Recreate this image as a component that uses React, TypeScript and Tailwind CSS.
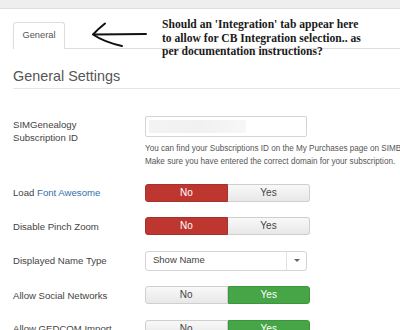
import React from 'react';

const sans = { fontFamily: '"Liberation Sans", Arial, sans-serif' };

interface ToggleProps {
  value: 'no' | 'yes';
}

const Toggle: React.FC<ToggleProps> = ({ value }) => (
  <div className="flex w-[165px] h-[18px] text-[10px] leading-none">
    <div
      className={
        value === 'no'
          ? 'flex-1 flex items-center justify-center rounded-l-[3px] bg-[#bd362f] border border-[#a8302a] text-white'
          : 'flex-1 flex items-center justify-center rounded-l-[3px] bg-gradient-to-b from-[#f8f8f8] to-[#e8e8e8] border border-[#cfcfcf] text-[#444]'
      }
    >
      No
    </div>
    <div
      className={
        value === 'yes'
          ? 'flex-1 flex items-center justify-center rounded-r-[3px] bg-[#46a546] border border-[#3f953f] text-white'
          : 'flex-1 flex items-center justify-center rounded-r-[3px] bg-gradient-to-b from-[#f8f8f8] to-[#e8e8e8] border border-l-0 border-[#cfcfcf] text-[#444]'
      }
    >
      Yes
    </div>
  </div>
);

const Row: React.FC<{ label: React.ReactNode; children: React.ReactNode; className?: string }> = ({
  label,
  children,
  className = '',
}) => (
  <div className={`flex items-center ${className}`}>
    <div className="w-[132px] shrink-0 text-[9.6px] leading-[13px] text-[#444]">{label}</div>
    {children}
  </div>
);

export default function App() {
  return (
    <div className="relative w-[400px] h-[330px] overflow-hidden bg-white" style={sans}>
      <div className="h-[9px] bg-[#eeeeee] border-b border-[#dddddd]" />

      <div className="pl-[13px]">
        {/* tabs */}
        <div className="mt-[13px] flex border-b border-[#dddddd] h-[27px]">
          <div className="w-[52px] h-[27px] border border-b-0 border-[#dddddd] rounded-t-[3px] bg-white flex items-center justify-center text-[9.3px] text-[#555] -mb-px">
            General
          </div>
        </div>

        <h2 className="mt-[17px] pb-[2px] text-[14.4px] leading-[20px] text-[#555] border-b border-[#e5e5e5]">
          General Settings
        </h2>

        <Row
          className="mt-[27px] !items-start"
          label={
            <div className="pt-[2px]">
              SIMGenealogy
              <br />
              Subscription ID
            </div>
          }
        >
          <div className="flex flex-col">
            <div className="w-[162px] h-[21px] border border-[#d4d4d4] rounded-[2px] bg-white p-[3px]">
              <div className="w-[97px] h-full bg-gradient-to-r from-[#f3f3f3] via-[#f1f1f1] to-[#f7f7f7]" />
            </div>
            <div className="mt-[5px] text-[8.15px] leading-[13px] text-[#555] whitespace-nowrap">
              You can find your Subscriptions ID on the My Purchases page on SIMBoss.com
              <br />
              Make sure you have entered the correct domain for your subscription.
            </div>
          </div>
        </Row>

        <Row
          className="mt-[15.5px]"
          label={
            <>
              Load <span className="text-[#3071a9]">Font Awesome</span>
            </>
          }
        >
          <Toggle value="no" />
        </Row>

        <Row className="mt-[15.5px]" label="Disable Pinch Zoom">
          <Toggle value="no" />
        </Row>

        <Row className="mt-[15.5px]" label="Displayed Name Type">
          <div className="flex w-[162px] h-[20px] border border-[#d4d4d4] rounded-[3px] bg-white text-[9.5px] text-[#444]">
            <div className="flex-1 flex items-center pl-[7px]">Show Name</div>
            <div className="w-[20px] border-l border-[#e0e0e0] flex items-center justify-center">
              <div className="w-0 h-0 border-l-[3px] border-r-[3px] border-t-[3px] border-l-transparent border-r-transparent border-t-[#666]" />
            </div>
          </div>
        </Row>

        <Row className="mt-[15.5px]" label="Allow Social Networks">
          <Toggle value="yes" />
        </Row>

        <Row className="mt-[15.5px]" label="Allow GEDCOM Import">
          <Toggle value="yes" />
        </Row>
      </div>

      {/* hand-drawn annotation */}
      <svg className="absolute left-0 top-0 pointer-events-none" width="400" height="60">
        <path d="M146 34 L94 34.5" stroke="#111" strokeWidth="2" fill="none" strokeLinecap="round" />
        <path d="M105 23.5 Q98 29 93 34.5 Q104 42 122 46" stroke="#111" strokeWidth="2" fill="none" strokeLinecap="round" strokeLinejoin="round" />
      </svg>
      <div
        className="absolute left-[162px] top-[18px] text-[11.6px] leading-[13.5px] font-bold text-[#1a1a1a] whitespace-nowrap"
        style={{ fontFamily: '"Liberation Serif", "Times New Roman", serif' }}
      >
        Should an 'Integration' tab appear here
        <br />
        to allow for CB Integration selection.. as
        <br />
        per documentation instructions?
      </div>
    </div>
  );
}
